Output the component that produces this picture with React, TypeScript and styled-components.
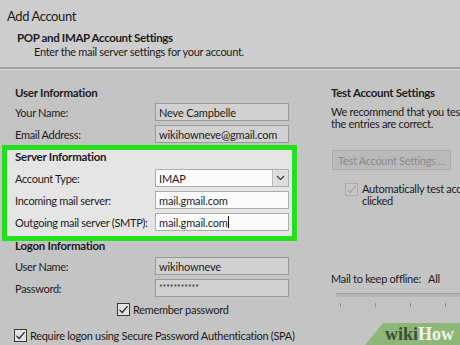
import React from "react";
import styled, { createGlobalStyle } from "styled-components";

const Global = createGlobalStyle`
  html, body { margin: 0; padding: 0; }
  body {
    width: 460px; height: 345px; overflow: hidden; background: #c4c4c4;
    font-family: Lato, "Open Sans", sans-serif; color: #1c1c1c;
  }
  * { box-sizing: border-box; }
`;

const Page = styled.div`
  position: relative;
  width: 460px;
  height: 345px;
  overflow: hidden;
  background: #c4c4c4;
`;

const Header = styled.header`
  height: 67px;
  background: #cdcdcd;
  padding: 8px 0 0 7px;
  display: flex;
  flex-direction: column;
`;

const Title = styled.div`
  font-size: 13px;
  letter-spacing: -0.4px;
  line-height: 16px;
  color: #222;
`;

const Heading = styled.div`
  margin: 7px 0 0 10px;
  font-weight: 700;
  font-size: 11.5px;
  letter-spacing: -0.35px;
  line-height: 14px;
`;

const Sub = styled.div`
  margin-left: 27px;
  font-size: 11px;
  letter-spacing: -0.3px;
  line-height: 13px;
`;

const Divider = styled.div`
  height: 3px;
  border-top: 2px solid #9f9f9f;
  border-bottom: 1px solid #dcdcdc;
`;

const Body = styled.main`
  display: grid;
  grid-template-columns: 331px 1fr;
  padding-top: 16px;
`;

const Left = styled.section`
  display: flex;
  flex-direction: column;
`;

const SectionTitle = styled.div<{ $lh?: number }>`
  padding-left: 15px;
  font-weight: 700;
  font-size: 11.5px;
  letter-spacing: -0.25px;
  line-height: ${(p) => p.$lh ?? 14}px;
  white-space: nowrap;
`;

const Fields = styled.div<{ $top: number }>`
  display: flex;
  flex-direction: column;
  gap: 4px;
  margin-top: ${(p) => p.$top}px;
`;

const FieldRow = styled.div`
  display: grid;
  grid-template-columns: 140px 134px;
  align-items: center;
  height: 18px;
  padding-left: 15px;
  font-size: 11px;
`;

const Label = styled.span`
  white-space: nowrap;
  letter-spacing: -0.3px;
`;

const Input = styled.div<{ $white?: boolean }>`
  position: relative;
  display: flex;
  align-items: center;
  height: 18px;
  padding: 0 3px;
  font-size: 11px;
  letter-spacing: -0.15px;
  white-space: nowrap;
  background: ${(p) => (p.$white ? "#fbfbfb" : "#d1d1d1")};
  border: 1px solid ${(p) => (p.$white ? "#acacac" : "#9a9a9a")};
`;

const Stars = styled.span`
  font-size: 8.5px;
  letter-spacing: 0px;
  color: #2a2a2a;
`;

const Caret = styled.span`
  display: inline-block;
  width: 1px;
  height: 12px;
  background: #111;
  margin-left: 0.5px;
`;

const DropButton = styled.span`
  position: absolute;
  right: 0;
  top: 0;
  bottom: 0;
  width: 16px;
  display: flex;
  align-items: center;
  justify-content: center;
  background: #dfdfdf;
  border-left: 1px solid #bababa;
`;

const ServerBox = styled.div`
  margin: 2px 0 0 2px;
  width: 295px;
  border: 5px solid #22e11c;
  background: #e5e5e5;
  padding: 0 0 5px 0;
  & > ${SectionTitle}, & ${FieldRow} {
    padding-left: 8px;
  }
`;

const CheckRow = styled.label<{ $left: number; $top: number }>`
  display: flex;
  align-items: center;
  gap: 3px;
  height: 14px;
  margin-top: ${(p) => p.$top}px;
  padding-left: ${(p) => p.$left}px;
  font-size: 11px;
  letter-spacing: -0.3px;
  white-space: nowrap;
`;

const Box = styled.span<{ $disabled?: boolean }>`
  flex: none;
  width: 13px;
  height: 13px;
  display: inline-flex;
  align-items: center;
  justify-content: center;
  border: 1px solid ${(p) => (p.$disabled ? "#a9a9a9" : "#3a3a3a")};
  background: ${(p) => (p.$disabled ? "#c6c6c6" : "#e2e2e2")};
`;

const Right = styled.section`
  display: flex;
  flex-direction: column;
  overflow: hidden;
  white-space: nowrap;
`;

const RightTitle = styled.div`
  font-weight: 700;
  font-size: 11.5px;
  letter-spacing: -0.3px;
  line-height: 14px;
`;

const Para = styled.div`
  margin-top: 6px;
  font-size: 11px;
  letter-spacing: -0.3px;
  line-height: 12px;
`;

const TestButton = styled.button`
  margin: 20px 0 0 1px;
  width: 119px;
  height: 20px;
  padding: 0;
  font-family: inherit;
  font-size: 11px;
  letter-spacing: -0.3px;
  color: #8a8a8a;
  background: #bababa;
  border: 1px solid #ababab;
  text-align: center;
`;

const AutoRow = styled.div`
  display: flex;
  align-items: flex-start;
  gap: 4px;
  margin-top: 13px;
  padding-left: 14px;
  font-size: 11px;
  letter-spacing: -0.3px;
  line-height: 12px;
`;

const AutoText = styled.div`
  margin-top: 0;
`;

const Offline = styled.div`
  margin-top: 66px;
  font-size: 11px;
  letter-spacing: -0.3px;
  line-height: 12px;
`;

const Track = styled.div`
  margin: 8px 0 0 5px;
  height: 4px;
  background: #b6b6b6;
  border-top: 1px solid #a2a2a2;
`;

const Ticks = styled.div`
  display: flex;
  gap: 34px;
  margin-top: 6px;
  padding-left: 9px;
`;

const Tick = styled.span`
  width: 1px;
  height: 4px;
  background: #8c8c8c;
`;

const Badge = styled.div`
  position: absolute;
  right: 0;
  bottom: 0;
  width: 95px;
  height: 22px;
  background: #8eb677;
  clip-path: polygon(18px 0, 100% 0, 100% 100%, 0 100%);
  padding-left: 20px;
  font-family: "Liberation Serif", "DejaVu Serif", serif;
  font-weight: 700;
  font-size: 18px;
  line-height: 22px;
  white-space: nowrap;
`;

const Wiki = styled.span`
  color: #3e4b3b;
`;

const How = styled.span`
  color: #f1f4ee;
`;

const Check = ({ color }: { color: string }) => (
  <svg width="11" height="11" viewBox="0 0 11 11">
    <path d="M1.5 5.8 L4.2 8.5 L9.6 2.2" fill="none" stroke={color} strokeWidth="1.2" />
  </svg>
);

const Chevron = () => (
  <svg width="9" height="6" viewBox="0 0 9 6">
    <path d="M1 1 L4.5 4.5 L8 1" fill="none" stroke="#333" strokeWidth="1.1" />
  </svg>
);

export default function App() {
  return (
    <Page>
      <Global />
      <Header>
        <Title>Add Account</Title>
        <Heading>POP and IMAP Account Settings</Heading>
        <Sub>Enter the mail server settings for your account.</Sub>
      </Header>
      <Divider />
      <Body>
        <Left>
          <SectionTitle>User Information</SectionTitle>
          <Fields $top={3}>
            <FieldRow>
              <Label>Your Name:</Label>
              <Input>Neve Campbelle</Input>
            </FieldRow>
            <FieldRow>
              <Label>Email Address:</Label>
              <Input>wikihowneve@gmail.com</Input>
            </FieldRow>
          </Fields>
          <ServerBox>
            <SectionTitle>Server Information</SectionTitle>
            <Fields $top={5}>
              <FieldRow>
                <Label>Account Type:</Label>
                <Input $white>
                  IMAP
                  <DropButton>
                    <Chevron />
                  </DropButton>
                </Input>
              </FieldRow>
              <FieldRow>
                <Label>Incoming mail server:</Label>
                <Input $white>mail.gmail.com</Input>
              </FieldRow>
              <FieldRow>
                <Label>Outgoing mail server (SMTP):</Label>
                <Input $white>
                  mail.gmail.com
                  <Caret />
                </Input>
              </FieldRow>
            </Fields>
          </ServerBox>
          <SectionTitle $lh={10}>Logon Information</SectionTitle>
          <Fields $top={6}>
            <FieldRow>
              <Label>User Name:</Label>
              <Input>wikihowneve</Input>
            </FieldRow>
            <FieldRow>
              <Label>Password:</Label>
              <Input>
                <Stars>***********</Stars>
              </Input>
            </FieldRow>
          </Fields>
          <CheckRow $left={117} $top={5}>
            <Box>
              <Check color="#222" />
            </Box>
            Remember password
          </CheckRow>
          <CheckRow $left={14} $top={12}>
            <Box>
              <Check color="#222" />
            </Box>
            Require logon using Secure Password Authentication (SPA)
          </CheckRow>
        </Left>
        <Right>
          <RightTitle>Test Account Settings</RightTitle>
          <Para>
            We recommend that you test the account to ensure that
            <br />
            the entries are correct.
          </Para>
          <TestButton disabled>Test Account Settings ...</TestButton>
          <AutoRow>
            <Box $disabled>
              <Check color="#a2a2a2" />
            </Box>
            <AutoText>
              Automatically test account settings when Next is
              <br />
              clicked
            </AutoText>
          </AutoRow>
          <Offline>Mail to keep offline:&nbsp;&nbsp;&nbsp;All</Offline>
          <Track />
          <Ticks>
            <Tick />
            <Tick />
            <Tick />
            <Tick />
          </Ticks>
        </Right>
      </Body>
      <Badge>
        <Wiki>wiki</Wiki>
        <How>How</How>
      </Badge>
    </Page>
  );
}
